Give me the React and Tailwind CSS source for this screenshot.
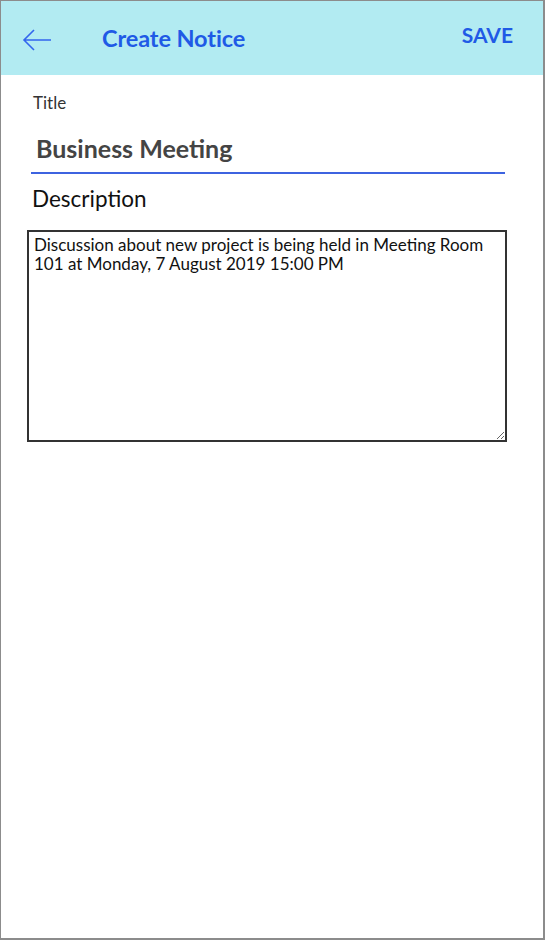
import React from "react";

export default function App() {
  return (
    <div
      className="w-[546px] h-[940px] bg-white"
      style={{ fontFamily: "Lato, 'Noto Sans', sans-serif" }}
    >
      <div className="w-[545px] h-[940px] border border-[#8c8c8c] border-r-2 border-b-2 flex flex-col">
        <header className="h-[74px] bg-[#b2ebf2] flex items-center pl-[21px] pr-[30px] shrink-0">
          <svg width="30" height="22" viewBox="0 0 30 22" className="mt-[3px]">
            <path
              d="M29 11H2M12 1L2 11l10 10"
              fill="none"
              stroke="#3366ee"
              strokeWidth="1.6"
            />
          </svg>
          <div className="ml-[50px] mt-[2px] text-[23.5px] font-bold text-[#1f5ae6] tracking-[-0.1px]">
            Create Notice
          </div>
          <div className="ml-auto -mt-[6px] text-[21px] font-bold text-[#1f5ae6]">
            SAVE
          </div>
        </header>
        <main className="flex flex-col px-[26px] pt-[18px]">
          <label className="ml-[6px] text-[17px] text-[#333] leading-[20px]">
            Title
          </label>
          <div className="mt-[20px] ml-[4px] mr-[12px] border-b-2 border-[#3d63e0] pb-[9px]">
            <div className="ml-[5px] text-[25px] font-bold text-[#444] leading-[30px]">
              Business Meeting
            </div>
          </div>
          <div className="mt-[11px] ml-[5px] text-[22.5px] text-[#111] leading-[28px]">
            Description
          </div>
          <textarea
            className="mt-[17px] w-[480px] h-[212px] border-2 border-[#333] px-[5px] py-[3px] text-[17px] leading-[19px] text-[#111] outline-none"
            style={{ fontFamily: "Lato, 'Noto Sans', sans-serif" }}
            defaultValue="Discussion about new project is being held in Meeting Room 101 at Monday, 7 August 2019 15:00 PM"
          />
        </main>
      </div>
    </div>
  );
}
